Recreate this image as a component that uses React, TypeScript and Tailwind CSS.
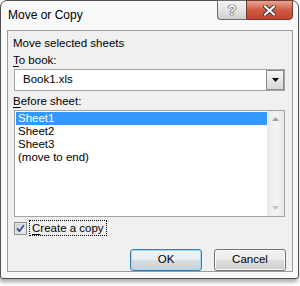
import React from "react";

const Check = () => (
  <svg width="13" height="13" viewBox="0 0 13 13" className="block">
    <defs>
      <linearGradient id="cbg" x1="0" y1="0" x2="1" y2="1">
        <stop offset="0" stopColor="#cbcfd5" />
        <stop offset="1" stopColor="#f6f6f6" />
      </linearGradient>
    </defs>
    <rect x="0.5" y="0.5" width="12" height="12" fill="#f4f4f4" stroke="#8e8f8f" />
    <rect x="2" y="2" width="9" height="9" fill="url(#cbg)" stroke="#c4c8cc" strokeWidth="0.6" />
    <path d="M3.2 6.4 L5.4 9.2 L9.8 3.2" fill="none" stroke="#2a4a8a" strokeWidth="1.7" strokeLinejoin="round" />
  </svg>
);

export default function App() {
  return (
    <div className="w-[300px] h-[286px] bg-white font-['Liberation_Sans',Arial,sans-serif] text-[11.5px] text-black">
      <div className="w-[299px] h-[279px] rounded-t-[7px] rounded-b-[3px] border border-[#505050] bg-[#f8f9fa] flex flex-col shadow-[-1px_3px_4px_rgba(0,0,0,0.35)]">
        {/* title bar */}
        <div className="h-[29px] flex items-start shrink-0">
          <span className="ml-[7px] mt-[6px] text-[12px] leading-[16px]">Move or Copy</span>
          <div className="ml-auto mr-[5px] -mt-px flex">
            <div className="w-[29px] h-[20px] border border-[#6b6b6b] border-r-0 rounded-bl-[4px] bg-gradient-to-b from-[#f4f4f4] via-[#e4e4e4] to-[#cfcfcf] flex items-center justify-center">
              <span className="text-[14px] leading-none font-bold text-white [text-shadow:0_0_1px_#222,0_0_1px_#222,0_0_1px_#222]">?</span>
            </div>
            <div className="w-[47px] h-[20px] border border-[#6b3a32] rounded-br-[4px] bg-gradient-to-b from-[#e8a592] via-[#cf5a45] to-[#c4442e] flex items-center justify-center">
              <svg width="13" height="11" viewBox="0 0 13 11">
                <path d="M2 1.5 L11 9.5 M11 1.5 L2 9.5" stroke="#3a3a3a" strokeWidth="4" strokeLinecap="square" />
                <path d="M2 1.5 L11 9.5 M11 1.5 L2 9.5" stroke="#ffffff" strokeWidth="2" strokeLinecap="square" />
              </svg>
            </div>
          </div>
        </div>

        {/* client area */}
        <div className="ml-[6px] mr-[5px] h-[242px] border border-[#9c9c9c] bg-[#f0f0f0] flex flex-col">
          <div className="pl-[5px] pt-[5px] leading-[15px]">Move selected sheets</div>
          <div className="pl-[5px] mt-[2px] leading-[15px]">
            <span className="underline underline-offset-2">T</span>o book:
          </div>
          <div className="ml-[6px] mt-px w-[271px] h-[22px] border border-[#a4a4a4] bg-white flex items-center">
            <span className="pl-[8px] flex-1">Book1.xls</span>
            <div className="w-[18px] h-[20px] border border-[#8a8a8a] bg-gradient-to-b from-[#f6f6f6] to-[#d8d8d8] flex items-center justify-center">
              <svg width="7" height="4" viewBox="0 0 7 4">
                <path d="M0 0 H7 L3.5 4 Z" fill="#000" />
              </svg>
            </div>
          </div>
          <div className="pl-[5px] mt-[3px] leading-[15px]">
            <span className="underline underline-offset-2">B</span>efore sheet:
          </div>
          <div className="ml-[6px] mt-px w-[271px] h-[107px] border border-[#a4a4a4] bg-white flex">
            <div className="flex-1 pl-px pt-px">
              <div className="h-[13px] leading-[13px] pl-[2px] bg-[#3399ff] text-white">Sheet1</div>
              <div className="h-[13px] leading-[13px] pl-[2px]">Sheet2</div>
              <div className="h-[13px] leading-[13px] pl-[2px]">Sheet3</div>
              <div className="h-[13px] leading-[13px] pl-[2px]">(move to end)</div>
            </div>
            <div className="w-[17px] bg-gradient-to-r from-[#e8e8e8] via-[#f4f4f4] to-[#e8e8e8] flex flex-col items-center justify-between py-[6px]">
              <svg width="7" height="4" viewBox="0 0 7 4">
                <path d="M0 4 H7 L3.5 0 Z" fill="#a0a0a0" />
              </svg>
              <svg width="7" height="4" viewBox="0 0 7 4">
                <path d="M0 0 H7 L3.5 4 Z" fill="#c4c4c4" />
              </svg>
            </div>
          </div>
          <div className="ml-[6px] mt-[3px] h-[16px] flex items-center">
            <Check />
            <span className="ml-[2px] px-[2px] h-[16px] leading-[14px] border border-dotted border-black">
              <span className="underline underline-offset-2">C</span>reate a copy
            </span>
          </div>
          <div className="mt-[13px] mr-[6px] flex justify-end gap-[12px]">
            <button className="w-[72px] h-[22px] rounded-[3px] border border-[#3c7fb1] bg-[linear-gradient(to_bottom,#f2f5f7_0%,#e9eef1_50%,#d9dfe3_50%,#ccd3d8_100%)] shadow-[inset_0_0_0_1px_#9ed8f4] leading-none">
              OK
            </button>
            <button className="w-[72px] h-[22px] rounded-[3px] border border-[#707070] bg-[linear-gradient(to_bottom,#f2f2f2_0%,#ebebeb_50%,#dddddd_50%,#cfcfcf_100%)] shadow-[inset_0_0_0_1px_#fcfcfc] leading-none">
              Cancel
            </button>
          </div>
        </div>
      </div>
    </div>
  );
}
